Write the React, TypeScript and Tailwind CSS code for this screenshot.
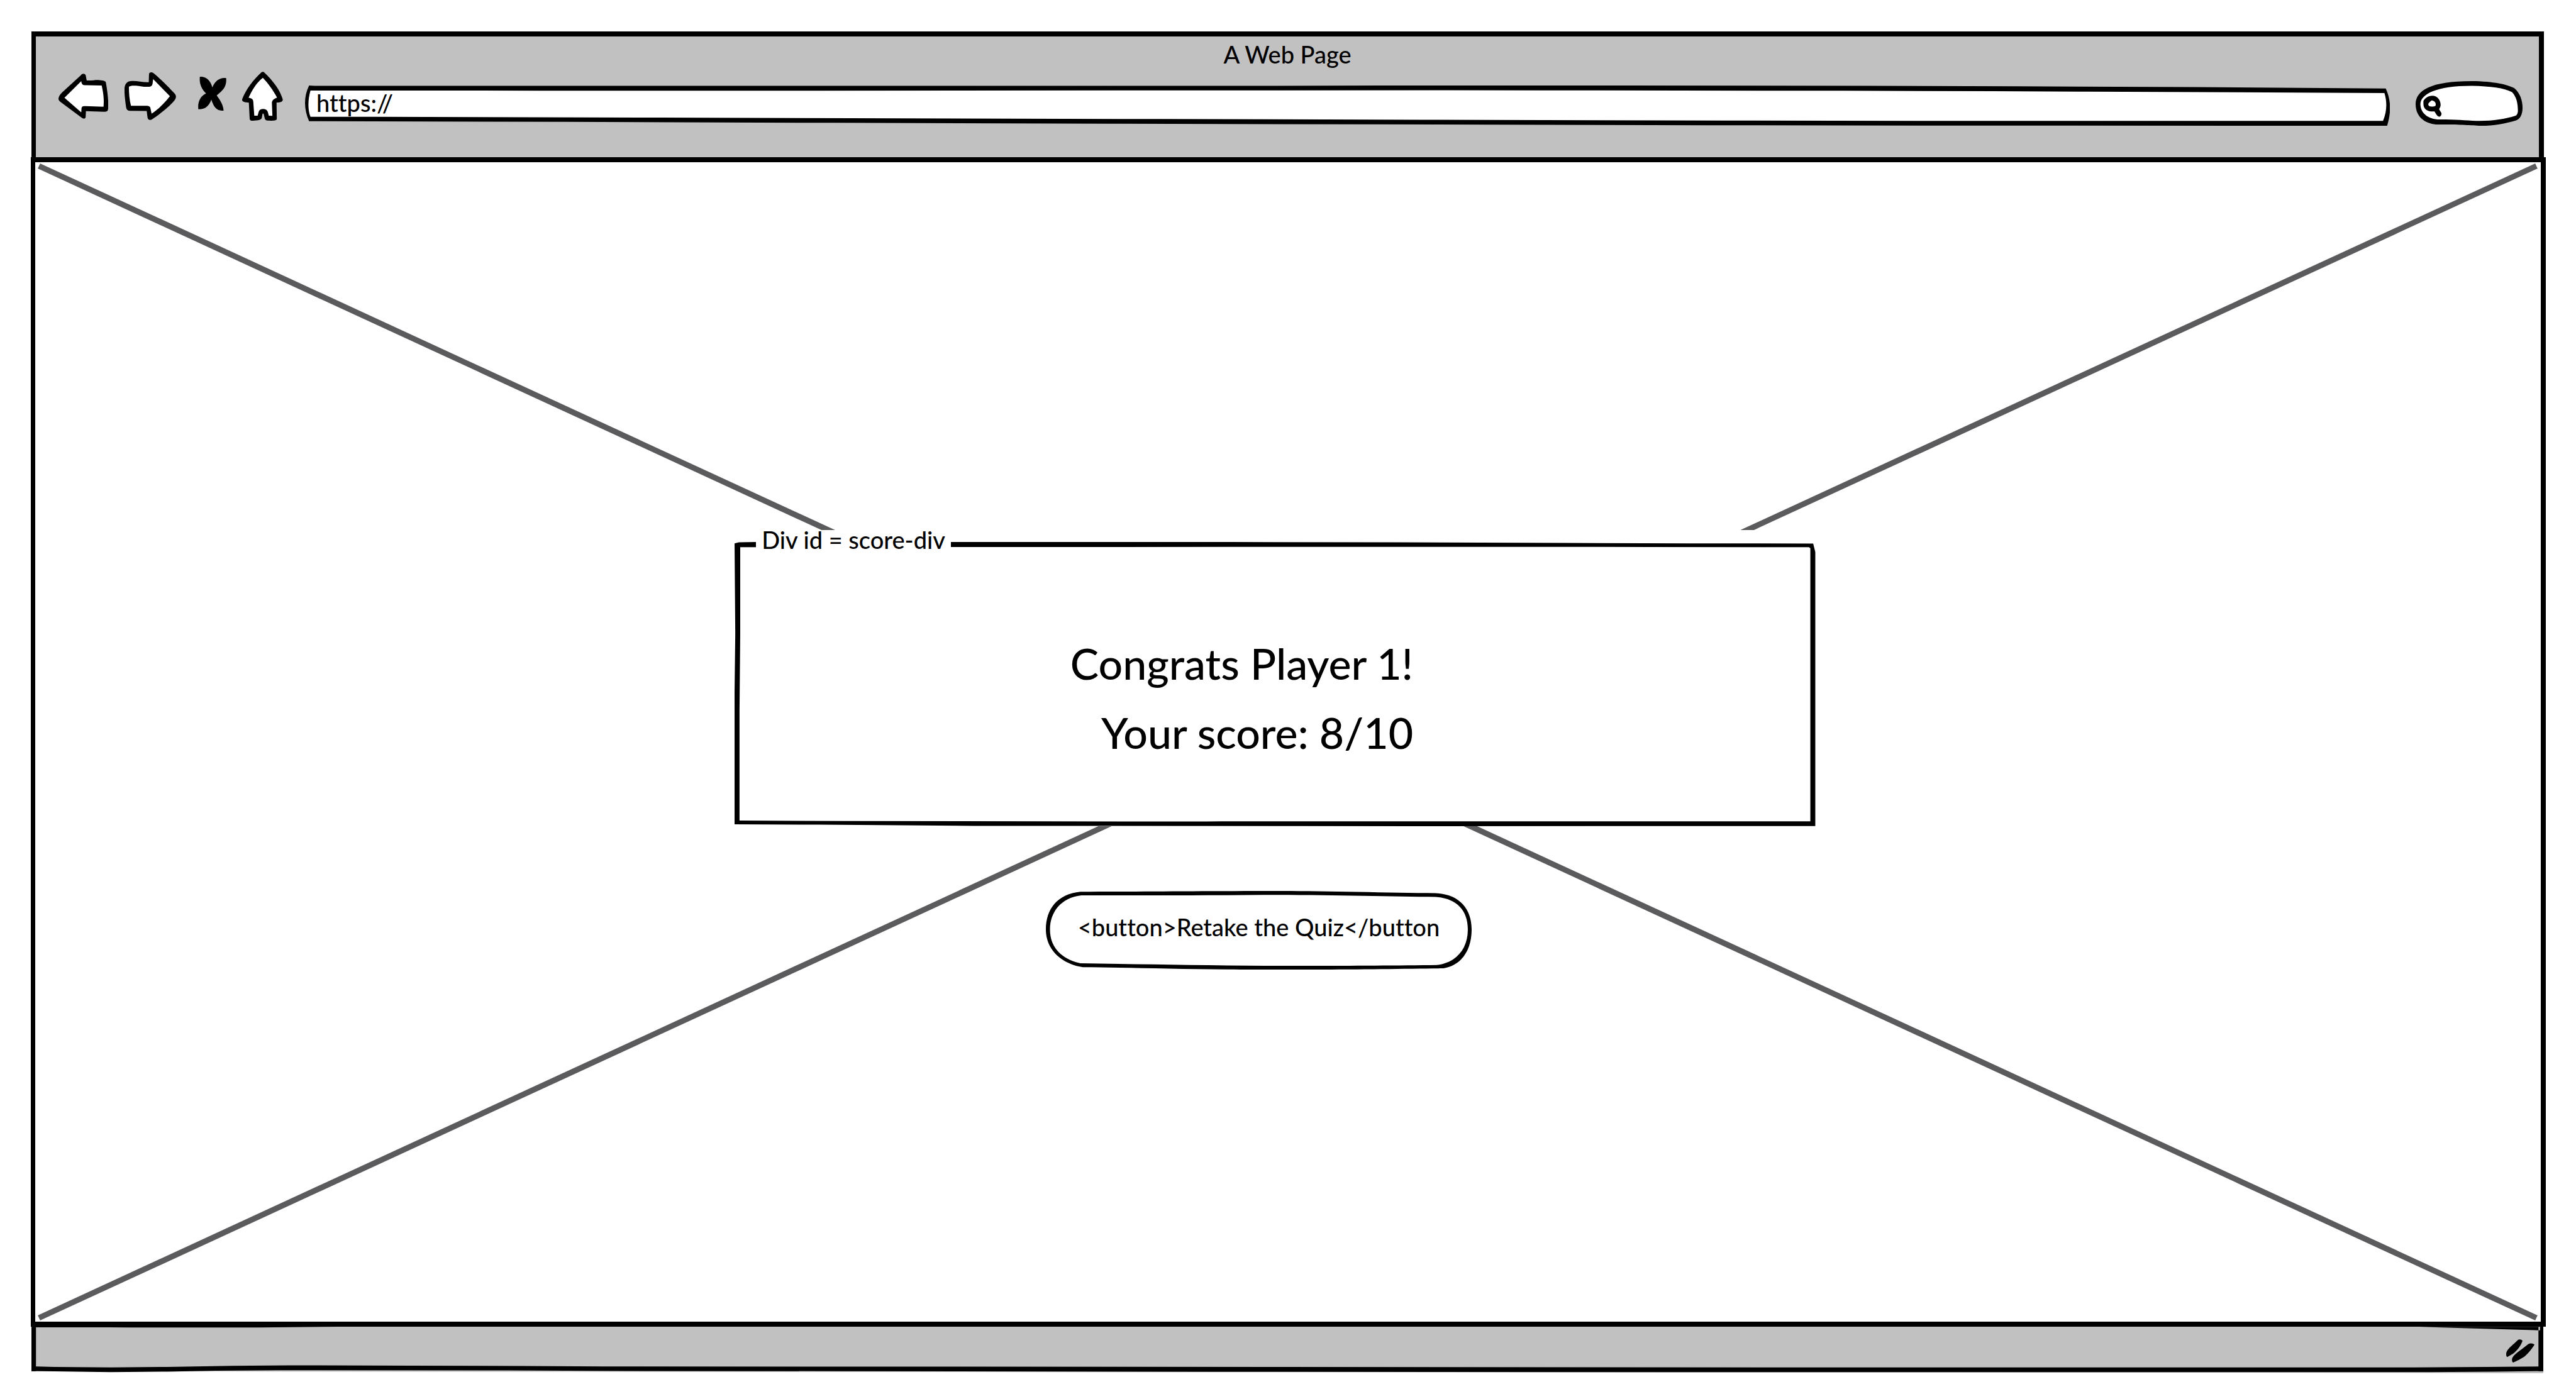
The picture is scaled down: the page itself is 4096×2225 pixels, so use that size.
import type { ReactNode } from "react";

type SketchProps = { viewBox: string; className: string; children: ReactNode };

/* Hand-drawn artwork that stretches to the box it decorates. */
function Sketch({ viewBox, className, children }: SketchProps) {
  return (
    <svg viewBox={viewBox} preserveAspectRatio="none" aria-hidden="true" className={className}>
      {children}
    </svg>
  );
}

function BackIcon() {
  return (
    <Sketch viewBox="141 417 192 368" className="h-[72px] w-[79px]">
      <path fill="#000" d="M141 620C142 600 148 585 155 570L228 430C232 415 242 413 246 430L250 473C270 476 280 469 295 470C310 473 322 475 324 488C330 560 335 640 333 700C332 725 328 729 316 727L247 722L246 770C245 786 238 788 230 775L150 650C144 640 141 632 141 620Z" />
      <path fill="#fff" d="M164 614L229 478C230 500 234 512 245 512L308 514C314 570 318 630 315 686L245 682C236 680 231 684 230 700L229 733Z" />
    </Sketch>
  );
}

function ForwardIcon() {
  return (
    <Sketch viewBox="398 417 200 389" className="h-[76px] w-[82px]">
      <path fill="#000" d="M398 545C400 510 408 485 430 487C450 487 470 500 492 498L493 430C496 414 504 414 511 425C540 475 570 540 590 585C600 605 600 625 590 650C570 700 530 765 505 800C497 810 488 805 487 780L484 732L418 730C408 728 406 720 404 700C400 640 397 590 398 545Z" />
      <path fill="#fff" d="M415 535C420 525 430 524 442 526C460 530 475 537 490 535C502 534 506 525 507 505L509 472L574 612C560 650 530 720 503 753L498 705C496 692 490 690 478 690L423 690C417 640 415 590 415 535Z" />
    </Sketch>
  );
}

function StopIcon() {
  return (
    <Sketch viewBox="683 448 111 277" className="mb-2 h-[54px] w-[45px]">
      <path fill="#000" d="M690 448C715 445 732 480 739 535C750 480 770 452 793 460C796 530 780 560 756 600C770 640 782 680 783 725C757 728 745 700 735 635C725 690 710 715 684 713C680 650 695 600 714 585C695 545 687 500 690 448Z" />
    </Sketch>
  );
}

function HomeIcon() {
  return (
    <Sketch viewBox="854 405 158 398" className="h-[78px] w-[65px]">
      <path fill="#000" d="M930 407L937 406C975 480 1002 560 1011 630C1012 650 1000 656 987 656L988 790C985 804 970 803 952 802C944 800 942 790 941 780L937 745H933L930 780C928 802 905 801 890 803C885 800 883 795 883 780L880 656C862 655 853 648 854 630C868 550 895 475 930 407Z" />
      <path fill="#fff" d="M934 455C955 500 975 560 989 615C975 625 970 640 969 655L971 763L957 762L953 730C948 700 922 700 918 730L914 762L901 762L897 645C896 625 888 620 879 617C893 550 912 490 934 455Z" />
    </Sketch>
  );
}

function NavButton({ label, children }: { label: string; children: ReactNode }) {
  return (
    <button type="button" aria-label={label} className="block shrink-0 cursor-pointer">
      {children}
    </button>
  );
}

function AddressBar() {
  return (
    <div className="relative h-16 min-w-0 flex-1">
      <Sketch viewBox="9 60 1534 330" className="absolute inset-0 h-full w-full">
        <path fill="#000" d="M12 60L16 63 700 63 800 60 980 60 1160 63 1270 67 1400 73 1540 84C1544 180 1544 280 1541 390L1200 389 1040 386 800 379 600 373 400 366 200 358 12 353C8 250 8 150 12 60Z" />
        <path fill="#fff" d="M13 101C11 180 11 260 13 316L60 317 272 323 450 329 640 335 830 341 1055 347 1230 350 1538 350C1541 270 1541 190 1539 122L1430 116 1320 110 1250 107 1140 103 920 100 850 99 390 102 180 102Z" />
      </Sketch>
      <input
        type="text"
        aria-label="Address"
        defaultValue="https://"
        className="relative h-full w-full bg-transparent pb-[10px] pl-[18px] text-[38px] font-medium outline-none"
      />
    </div>
  );
}

function SearchBox() {
  return (
    <div className="relative h-[71px] w-[170px] shrink-0">
      <Sketch viewBox="458 483 740 365" className="absolute inset-0 h-full w-full">
        <path fill="#000" d="M612 838C540 835 458 790 458 670C460 560 560 483 845 483C1000 485 1090 510 1140 540C1180 580 1198 640 1198 700C1198 760 1180 795 1150 805C1080 830 1000 848 910 848C830 845 760 836 612 838Z" />
        <path fill="#fff" d="M625 797C540 795 491 740 491 670C495 590 600 522 845 522C980 525 1070 540 1125 573C1155 610 1166 660 1166 730C1164 750 1158 762 1150 766C1070 795 990 810 880 808C800 805 740 797 625 797Z" />
        <path fill="#000" d="M573 602C610 602 632 640 631 680C630 697 622 705 621 714L636 742C640 755 632 773 621 773C608 773 598 750 589 731C545 735 512 715 512 670V645C520 625 545 602 573 602Z" />
        <path fill="#fff" d="M572 641C590 645 600 662 597 680C594 690 588 690 576 691C560 694 546 688 545 672C548 660 560 652 566 643Z" />
      </Sketch>
      <input
        type="search"
        aria-label="Search"
        className="relative h-full w-full bg-transparent pr-4 pl-12 text-[38px] font-medium outline-none"
      />
    </div>
  );
}

function BrowserHeader() {
  return (
    <header className="mr-[3px] ml-px border-t-8 border-r-8 border-l-7 border-black bg-[#c1c1c1] pt-1 pb-[50px]">
      <h1 className="text-center text-[38px] leading-[48px] font-medium">A Web Page</h1>
      <div className="mt-1 flex items-end pr-[26px] pl-9">
        <nav aria-label="Browser" className="mr-[35px] flex h-[78px] items-center self-start">
          <NavButton label="Back"><BackIcon /></NavButton>
          <div className="ml-[26px] flex"><NavButton label="Forward"><ForwardIcon /></NavButton></div>
          <div className="ml-[35px] flex"><NavButton label="Stop"><StopIcon /></NavButton></div>
          <div className="ml-[25px] flex"><NavButton label="Home"><HomeIcon /></NavButton></div>
        </nav>
        <div className="flex h-[86px] min-w-0 flex-1 items-end gap-[41px]">
          <AddressBar />
          <SearchBox />
        </div>
      </div>
    </header>
  );
}

function ScoreCard() {
  return (
    <div className="bg-white pt-[19px]">
      <section aria-labelledby="score-label" className="relative pt-[138px] pb-[94px]">
        <Sketch viewBox="22 28 1527 1463" className="absolute inset-0 h-full w-full">
          <path fill="#000" fillRule="evenodd" d="M22 35L28 30 52 28 720 28 960 30 1200 33 1370 35 1546 36L1549 80V1490L980 1491 820 1490 360 1489 140 1483 22 1481V800L23 500ZM30 55L455 54 720 53 1200 53 1315 54 1540 55 1542 60V1466H710L690 1467 460 1466 180 1464 29 1462V900L30 500Z" />
        </Sketch>
        <p
          id="score-label"
          className="absolute -top-[19px] left-[34px] bg-white px-[9px] text-[38px] leading-[30px] font-medium whitespace-nowrap"
        >
          Div id = score-div
        </p>
        <div className="relative flex justify-center pr-[106px]">
          <div className="text-right text-[68px] leading-[110px] font-medium whitespace-nowrap">
            <p>Congrats Player 1!</p>
            <p>Your score: 8/10</p>
          </div>
        </div>
      </section>
    </div>
  );
}

function RetakeButton() {
  return (
    <button type="button" className="relative h-[125px] w-[677px] cursor-pointer pb-[9px] text-[38px] font-medium whitespace-nowrap">
      <Sketch viewBox="113 675 1346 642" className="absolute inset-0 h-full w-full">
        <path fill="#000" d="M222 681C400 681 600 675 860 675C1000 675 1200 690 1345 693C1420 700 1459 820 1459 990C1459 1150 1430 1280 1370 1307C1200 1312 900 1322 685 1316C500 1312 350 1300 230 1298C160 1270 113 1150 113 990C113 820 150 700 222 681Z" />
        <path fill="#fff" d="M225 711C400 712 600 711 800 707C1000 706 1200 719 1345 724C1410 735 1447 830 1447 990C1447 1150 1410 1260 1350 1280C1200 1285 1000 1288 805 1286C600 1282 400 1272 222 1266C160 1230 126 1130 126 990C126 850 160 730 225 711Z" />
      </Sketch>
      <span className="relative">{"<button>Retake the Quiz</button"}</span>
    </button>
  );
}

function StatusBar() {
  return (
    <footer className="relative mr-1 ml-px flex h-[74px] justify-end pt-5 pr-[14px]">
      <Sketch viewBox="6 74 1554 381" className="absolute inset-0 h-full w-full">
        <path fill="#c1c1c1" d="M6 74H1560V455H1535L1458 451 1014 448 570 445 175 442 6 438Z" />
        <path fill="#000" d="M6 398L20 404 55 408 90 403 130 394 165 390 240 393 310 396 360 400 540 401 770 404 1080 407 1480 407 1525 403 1560 400V437L1530 442 1490 446 1015 446 735 443 510 438 355 436 300 432 160 430 120 435 90 442 55 446 20 440 6 437Z" />
        <path fill="#000" d="M6 74h2.8v364H6ZM1557 74h3v364h-3ZM1483 75L1558 104V74ZM6 74L66 80 147 80 196 74Z" />
      </Sketch>
      <Sketch viewBox="984 447 234 189" className="relative h-[37px] w-[45px]">
        <path fill="#000" d="M1080 454C1090 444 1110 446 1119 460C1105 500 1080 530 1052 556C1035 570 1010 582 992 591C982 583 982 565 987 550C1000 520 1050 485 1080 454Z" />
        <path fill="#000" d="M1166 486C1185 476 1205 480 1218 491C1200 520 1170 560 1135 588C1110 605 1070 625 1042 636C1030 630 1028 605 1040 590C1060 560 1120 525 1166 486Z" />
      </Sketch>
    </footer>
  );
}

export default function App() {
  return (
    <div className="flex min-h-screen flex-col bg-white pt-[50px] pr-12 pb-[41px] pl-[49px] font-['Lato',sans-serif] text-black [font-variant-ligatures:none]">
      <BrowserHeader />
      <main className="relative grid flex-1 grid-cols-[1112fr_1718fr_1153fr] content-center border-8 border-l-7 border-black bg-white pt-6">
        <Sketch viewBox="0 0 3983 1844" className="absolute inset-0 h-full w-full">
          <path
            fill="none"
            stroke="#5b5b5d"
            strokeWidth="9"
            vectorEffect="non-scaling-stroke"
            d="M6 6L3976 1838M3976 6L6 1838"
          />
        </Sketch>
        <div className="relative col-start-2 flex flex-col gap-[103px]">
          <ScoreCard />
          <div className="flex justify-center pr-[52px]">
            <RetakeButton />
          </div>
        </div>
      </main>
      <StatusBar />
    </div>
  );
}
